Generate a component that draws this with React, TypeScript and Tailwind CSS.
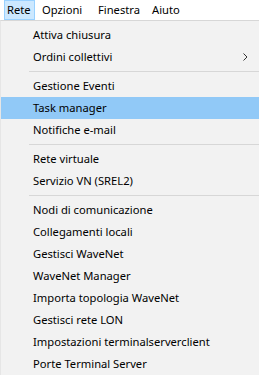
export default function App() {
  // null = separator
  const items: ({ label: string; sub?: boolean; active?: boolean } | null)[] = [
    { label: "Attiva chiusura" },
    { label: "Ordini collettivi", sub: true },
    null,
    { label: "Gestione Eventi" },
    { label: "Task manager", active: true },
    { label: "Notifiche e-mail" },
    null,
    { label: "Rete virtuale" },
    { label: "Servizio VN (SREL2)" },
    null,
    { label: "Nodi di comunicazione" },
    { label: "Collegamenti locali" },
    { label: "Gestisci WaveNet" },
    { label: "WaveNet Manager" },
    { label: "Importa topologia WaveNet" },
    { label: "Gestisci rete LON" },
    { label: "Impostazioni terminalserverclient" },
    { label: "Porte Terminal Server" },
  ];

  return (
    <div
      className="w-[259px] h-[375px] overflow-hidden bg-white text-black text-[11.2px]"
      style={{ fontFamily: '"Segoe UI", "Noto Sans", sans-serif' }}
    >
      {/* MENU BAR */}
      <div className="h-[20px] flex items-stretch pl-[4px]">
        <div className="w-[31px] flex items-center pl-[2px] bg-[#cce8ff] border border-[#99d1ff]">
          Rete
        </div>
        <div className="w-[57px] flex items-center pl-[7px]">Opzioni</div>
        <div className="w-[54px] flex items-center pl-[6px]">Finestra</div>
        <div className="flex items-center pl-[6px]">Aiuto</div>
      </div>

      {/* DROPDOWN */}
      <div className="bg-[#f2f2f2] border-t border-[#d7d7d7] border-l border-l-[#e6e6e6] pt-[3px] h-[355px]">
        {items.map((it, i) =>
          it === null ? (
            <div key={i} className="h-[7px] flex items-center pl-[28px]">
              <div className="h-px w-full bg-[#d7d7d7]" />
            </div>
          ) : (
            <div
              key={i}
              className={
                "h-[22px] flex items-center pl-[32px] pr-[10px] justify-between " +
                (it.active ? "bg-[#91c9f7]" : "")
              }
            >
              <span>{it.label}</span>
              {it.sub && (
                <svg width="5" height="8" viewBox="0 0 5 8" className="mr-[1px]">
                  <polyline points="0.5,0.5 4,4 0.5,7.5" fill="none" stroke="#333" strokeWidth="1" />
                </svg>
              )}
            </div>
          )
        )}
      </div>
    </div>
  );
}
